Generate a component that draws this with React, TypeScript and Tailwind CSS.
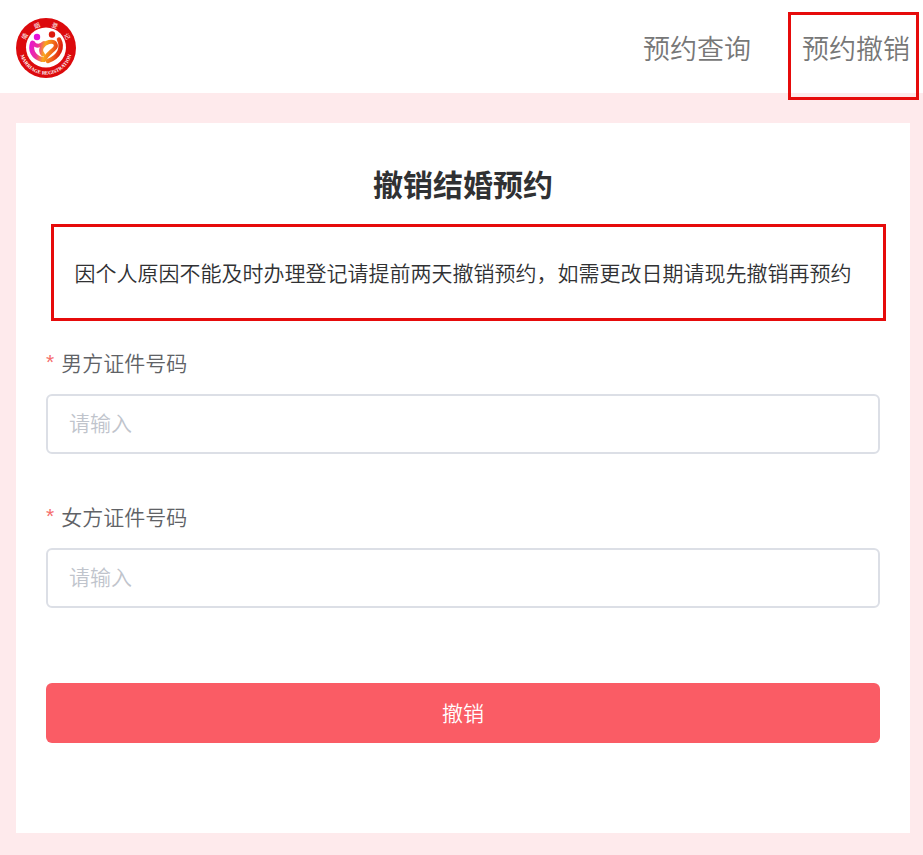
import { useState } from 'react';

interface Field {
  id: string;
  label: string;
}

const navItems = [
  { label: '预约查询', href: '#query', marked: false },
  { label: '预约撤销', href: '#cancel', marked: true },
];

const fields: Field[] = [
  { id: 'male-id', label: '男方证件号码' },
  { id: 'female-id', label: '女方证件号码' },
];

const ringChars = [
  { char: '婚', offset: '16%' },
  { char: '姻', offset: '38%' },
  { char: '登', offset: '62%' },
  { char: '记', offset: '84%' },
];

function Logo() {
  return (
    <svg viewBox="0 0 60 60" className="size-15" role="img" aria-label="婚姻登记">
      <defs>
        <linearGradient id="swirl" gradientUnits="userSpaceOnUse" x1="13" y1="24" x2="46" y2="30">
          <stop offset="0" stopColor="#e611d8" />
          <stop offset="0.28" stopColor="#ec2f9a" />
          <stop offset="0.5" stopColor="#f9a81b" />
          <stop offset="0.75" stopColor="#f0641a" />
          <stop offset="1" stopColor="#dc1a0c" />
        </linearGradient>
        <path id="arc-top" d="M8 30 A22 22 0 0 1 52 30" />
        <path id="arc-bottom" d="M3.5 30 A26.5 26.5 0 0 0 56.5 30" />
      </defs>
      <circle cx="30" cy="30" r="30" fill="#dc0a0d" />
      <circle cx="30" cy="29.5" r="20" fill="#fff" />
      {ringChars.map((item) => (
        <text key={item.char} fontSize="6" fill="#fff">
          <textPath href="#arc-top" startOffset={item.offset} textAnchor="middle">
            {item.char}
          </textPath>
        </text>
      ))}
      <text fontSize="5" fontWeight="bold" fill="#fff" fontFamily="Liberation Serif, serif">
        <textPath href="#arc-bottom" startOffset="50%" textAnchor="middle">
          MARRIAGE REGISTRATION
        </textPath>
      </text>
      <circle cx="21" cy="19" r="3.2" fill="#e611d8" />
      <circle cx="36" cy="16.5" r="3.2" fill="#dc1a0c" />
      <g fill="none" stroke="url(#swirl)" strokeLinecap="round" strokeLinejoin="round">
        <path d="M16.5 25 C14 32 17 39 26 41.5" strokeWidth="5" />
        <path d="M17 25 C20 29 25 28 28 25" strokeWidth="4" />
        <path d="M27 36.5 C22.5 32 27 25.5 33 24 C40 22.5 41.5 28 38 31 C35 34 31 36 28 42" strokeWidth="4" />
        <path d="M43 21.5 C47 29 44 38.5 32 43" strokeWidth="4.5" />
      </g>
    </svg>
  );
}

export default function App() {
  const [values, setValues] = useState<Record<string, string>>({});

  return (
    <div className="min-h-screen bg-[#feeaec] pb-[22px] font-['Noto_Sans_CJK_SC',sans-serif]">
      <header className="flex h-[93px] items-center justify-between bg-white pt-[3px] pr-[13px] pl-4">
        <a href="#home">
          <Logo />
        </a>
        <nav className="flex gap-[51px]">
          {navItems.map((item) => (
            <a
              key={item.label}
              href={item.href}
              className="relative text-[27px] leading-10 font-[350] text-[#777]"
            >
              {item.label}
              {item.marked && (
                <span className="absolute -top-4 -right-[9px] -bottom-8 -left-3.5 border-3 border-[#e60b0b]" />
              )}
            </a>
          ))}
        </nav>
      </header>

      <main className="mt-[30px] mr-[13px] ml-4 bg-white px-[30px] pt-10 pb-[90px]">
        <h1 className="text-center text-[30px] leading-10 font-bold text-[#303133]">
          撤销结婚预约
        </h1>

        <p className="relative mt-[21px] py-8 text-center text-[21px] leading-[33px] font-[350] text-[#303133]">
          因个人原因不能及时办理登记请提前两天撤销预约，如需更改日期请现先撤销再预约
          <span className="absolute inset-y-0 -right-1.5 left-[5px] border-3 border-[#e60b0b]" />
        </p>

        <form className="mt-6" onSubmit={(e) => e.preventDefault()}>
          {fields.map((field) => (
            <div key={field.id} className="mb-[45px]">
              <label
                htmlFor={field.id}
                className="flex h-[49px] gap-[7px] text-[21px] leading-[34px] font-[350] text-[#606266]"
              >
                <span className="font-['Liberation_Sans'] text-[#f56c6c]">*</span>
                {field.label}
              </label>
              <input
                id={field.id}
                type="text"
                required
                placeholder="请输入"
                value={values[field.id] ?? ''}
                onChange={(e) => setValues({ ...values, [field.id]: e.target.value })}
                className="block h-15 w-full rounded-md border-2 border-[#dcdfe6] px-[21px] pb-1 text-[21px] font-[350] text-[#606266] outline-none placeholder:text-[#c0c4cc]"
              />
            </div>
          ))}
          <button
            type="submit"
            className="mt-[75px] block h-15 w-full rounded-md bg-[#fa5c65] text-[21px] font-[350] text-white"
          >
            撤销
          </button>
        </form>
      </main>
    </div>
  );
}
